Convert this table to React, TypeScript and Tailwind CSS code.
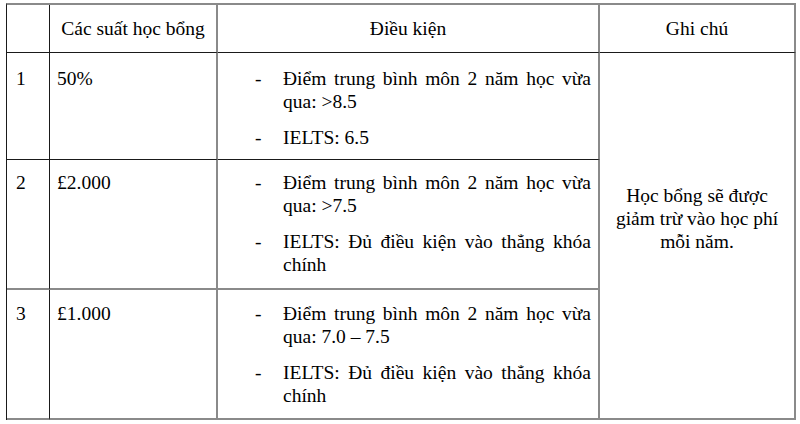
const rows = [
  {
    no: '1',
    amount: '50%',
    pt: 'pt-[14px]',
    border: 'border-b border-b-[#1a1a1a]',
    conditions: ['Điểm trung bình môn 2 năm học vừa qua: >8.5', 'IELTS: 6.5'],
  },
  {
    no: '2',
    amount: '£2.000',
    pt: 'pt-[11px]',
    border: 'border-b-2 border-b-[#8a8a8a]',
    conditions: [
      'Điểm trung bình môn 2 năm học vừa qua: >7.5',
      'IELTS: Đủ điều kiện vào thẳng khóa chính',
    ],
  },
  {
    no: '3',
    amount: '£1.000',
    pt: 'pt-[12px]',
    border: 'border-b-2 border-b-[#8a8a8a]',
    conditions: [
      'Điểm trung bình môn 2 năm học vừa qua: 7.0 – 7.5',
      'IELTS: Đủ điều kiện vào thẳng khóa chính',
    ],
  },
]

export default function App() {
  return (
    <div className="h-[424px] w-[800px] bg-white pl-[6px] pt-[3px] font-['Liberation_Serif',serif] text-[19.5px] leading-[23px] text-black">
      <div className="grid w-[790px] grid-cols-[43px_168px_382px_196px] grid-rows-[48px_107px_130px_130px] border-l border-t-2 border-l-[#1a1a1a] border-t-[#8a8a8a]">
        {/* header */}
        <div className="border-b border-r border-b-[#1a1a1a] border-r-[#1a1a1a]" />
        <div className="flex items-center justify-center border-b border-r-2 border-b-[#1a1a1a] border-r-[#8a8a8a]">
          Các suất học bổng
        </div>
        <div className="flex items-center justify-center border-b border-r-2 border-b-[#1a1a1a] border-r-[#8a8a8a]">
          Điều kiện
        </div>
        <div className="flex items-center justify-center border-b border-r-2 border-b-[#1a1a1a] border-r-[#8a8a8a]">
          Ghi chú
        </div>

        {rows.map((row, i) => (
          <div key={row.no} className="contents">
            <div className={`border-r border-r-[#1a1a1a] pl-[9px] ${row.pt} ${row.border}`}>{row.no}</div>
            <div className={`border-r-2 border-r-[#8a8a8a] pl-[7px] ${row.pt} ${row.border}`}>{row.amount}</div>
            <div className={`flex flex-col gap-[13px] border-r-2 border-r-[#8a8a8a] pl-[37px] pr-[7px] ${row.pt} ${row.border}`}>
              {row.conditions.map((c) => (
                <div key={c} className="flex">
                  <span className="w-[28px] shrink-0">-</span>
                  <p className="flex-1 text-justify">{c}</p>
                </div>
              ))}
            </div>
            {i === 0 && (
              <div className="row-span-3 border-b-2 border-r-2 border-b-[#8a8a8a] border-r-[#8a8a8a] pt-[131px] text-center">
                Học bổng sẽ được
                <br />
                giảm trừ vào học phí
                <br />
                mỗi năm.
              </div>
            )}
          </div>
        ))}
      </div>
    </div>
  )
}
